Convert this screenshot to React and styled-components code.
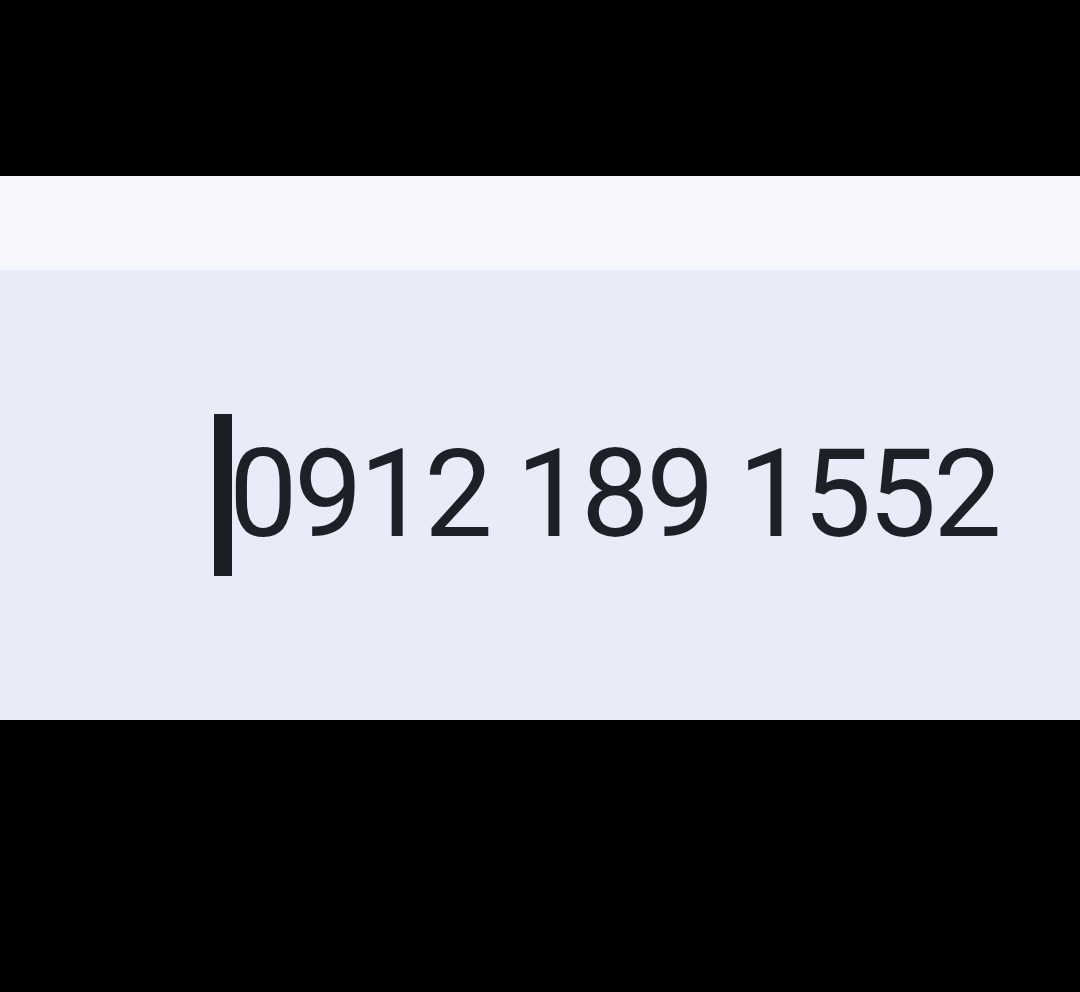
import React from 'react';
import styled, { createGlobalStyle } from 'styled-components';

const Global = createGlobalStyle`
	html, body {
		margin: 0;
		padding: 0;
		background: #000;
	}
	body {
		font-family: Roboto, 'Noto Sans', sans-serif;
	}
`;

const Screen = styled.div`
	display: flex;
	flex-direction: column;
	width: 1080px;
	height: 992px;
	background: #000;
`;

const Band = styled.div`
	height: ${(p) => p.h}px;
	background: ${(p) => p.bg};
	flex: 0 0 auto;
`;

const Field = styled.div`
	height: 450px;
	background: #e9ebf8;
	display: flex;
	align-items: center;
	padding-left: 214px;
`;

const Caret = styled.span`
	display: inline-block;
	width: 18px;
	height: 162px;
	background: #1b1e24;
	margin-right: -3px;
	position: relative;
	z-index: 1;
`;

const Number = styled.span`
	font-family: Roboto, sans-serif;
	font-size: 122px;
	font-weight: 400;
	color: #1d2027;
	line-height: 1;
	letter-spacing: -3.5px;
`;

function App() {
	return (
		<>
			<Global />
			<Screen>
				<Band h={176} bg='#000' />
				<Band h={94} bg='#f6f7fb' />
				<Field>
					<Caret />
					<Number>0912 189 1552</Number>
				</Field>
			</Screen>
		</>
	);
}

export default App;
